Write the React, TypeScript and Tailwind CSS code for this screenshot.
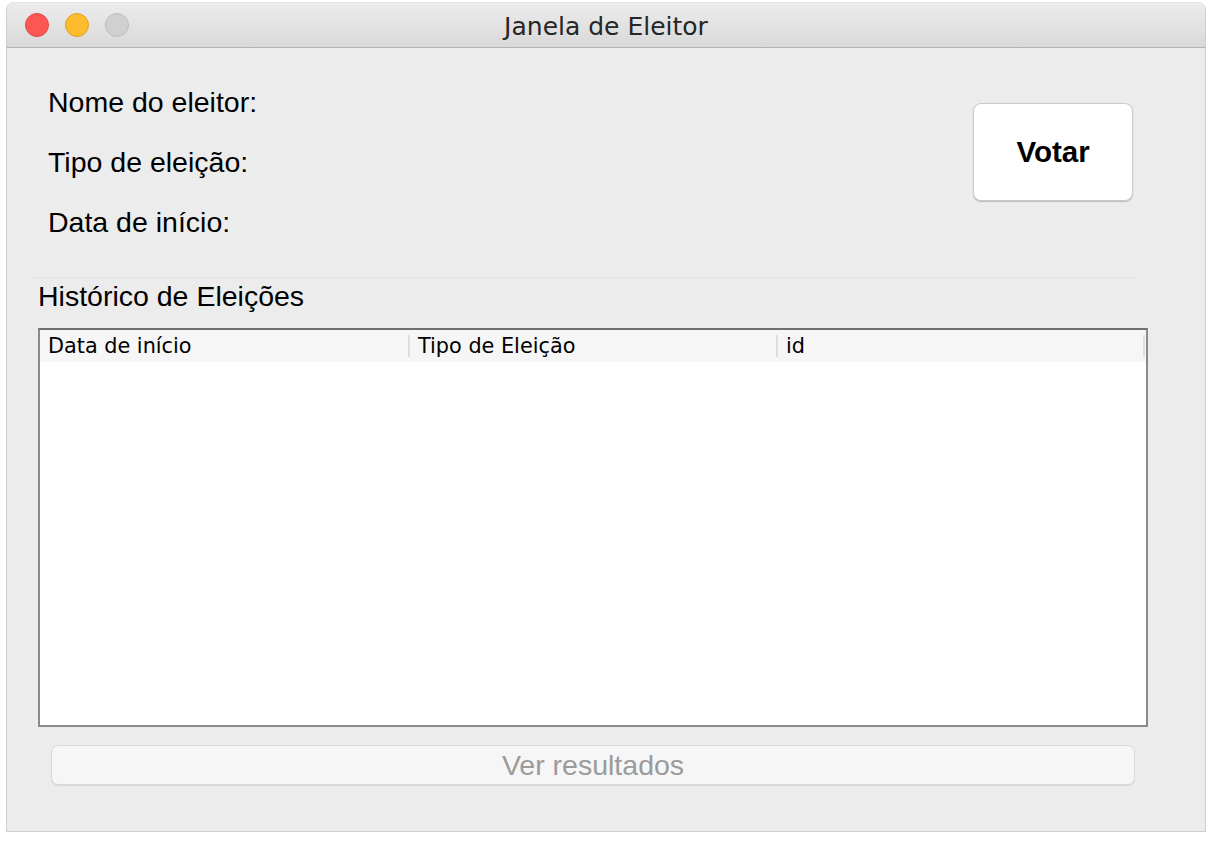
const sans = { fontFamily: '"Liberation Sans", Arial, sans-serif' };
const lucida = { fontFamily: '"DejaVu Sans", "Noto Sans", sans-serif' };

const TrafficLights = () => (
    <div className="flex items-center gap-[16px] pl-[18px]">
        <span className="w-[24px] h-[24px] rounded-full bg-[#fc5753] border border-[#df4744]" />
        <span className="w-[24px] h-[24px] rounded-full bg-[#fdbc2e] border border-[#dea123]" />
        <span className="w-[24px] h-[24px] rounded-full bg-[#d0d0d0] border border-[#bdbdbd]" />
    </div>
);

const App = () => {
    const labels = ["Nome do eleitor:", "Tipo de eleição:", "Data de início:"];
    const columns = [
        { name: "Data de início", width: "w-[370px]" },
        { name: "Tipo de Eleição", width: "w-[368px]" },
        { name: "id", width: "w-[367px]" },
    ];

    return (
        <div className="w-[1214px] h-[842px] bg-white pt-[2px] pl-[6px]">
            <div className="w-[1200px] h-[830px] flex flex-col border-x border-b border-[#cfcfcf] rounded-t-[8px] overflow-hidden bg-[#ececec]">
                {/* title bar */}
                <div className="relative h-[46px] shrink-0 flex items-center bg-gradient-to-b from-[#ececec] to-[#d9d9d9] border-b border-[#b3b3b3] border-t border-t-[#e4e4e4]">
                    <TrafficLights />
                    <div
                        className="absolute inset-0 flex items-center justify-center text-[25px] text-[#262626] pt-[3px]"
                        style={lucida}
                    >
                        Janela de Eleitor
                    </div>
                </div>

                {/* top section */}
                <div className="flex h-[229px] shrink-0">
                    <div className="flex flex-col pt-[24px] pl-[41px]">
                        {labels.map((l) => (
                            <div key={l} className="h-[60px] flex items-center text-[28.5px] text-black" style={sans}>
                                {l}
                            </div>
                        ))}
                    </div>
                    <div className="flex-1" />
                    <div className="pt-[55px] pr-[72px]">
                        <button
                            className="w-[160px] h-[98px] bg-white rounded-[8px] border border-[#c9c9c9] shadow-[0_1px_1px_rgba(0,0,0,0.2)] text-[29.5px] font-bold text-black"
                            style={sans}
                        >
                            Votar
                        </button>
                    </div>
                </div>

                {/* separator */}
                <div className="ml-[24px] w-[1105px] h-[1px] bg-[#e2e2e2]" />

                <div className="pl-[31px] h-[37px] flex items-center text-[28.5px] text-black" style={sans}>
                    Histórico de Eleições
                </div>

                {/* table */}
                <div className="ml-[31px] mt-[13px] w-[1110px] h-[399px] bg-white border-2 border-[#8a8a8a] border-t-[#6f6f6f]">
                    <div className="h-[32px] flex bg-[#f6f6f6] text-[20.8px] text-black" style={lucida}>
                        {columns.map((c) => (
                            <div key={c.name} className={`${c.width} flex items-center`}>
                                <span className="flex-1 pl-[8px] pt-[1px]">{c.name}</span>
                                <span className="w-[2px] h-[22px] bg-[#dedede]" />
                            </div>
                        ))}
                    </div>
                </div>

                {/* bottom button */}
                <div className="ml-[44px] mt-[18px]">
                    <button
                        className="w-[1084px] h-[40px] rounded-[7px] bg-[#f6f6f6] border border-[#d9d9d9] shadow-[0_1px_0_rgba(0,0,0,0.08)] text-[28.5px] leading-none text-[#9b9b9b]"
                        style={sans}
                    >
                        Ver resultados
                    </button>
                </div>
            </div>
        </div>
    );
};

export default App;
